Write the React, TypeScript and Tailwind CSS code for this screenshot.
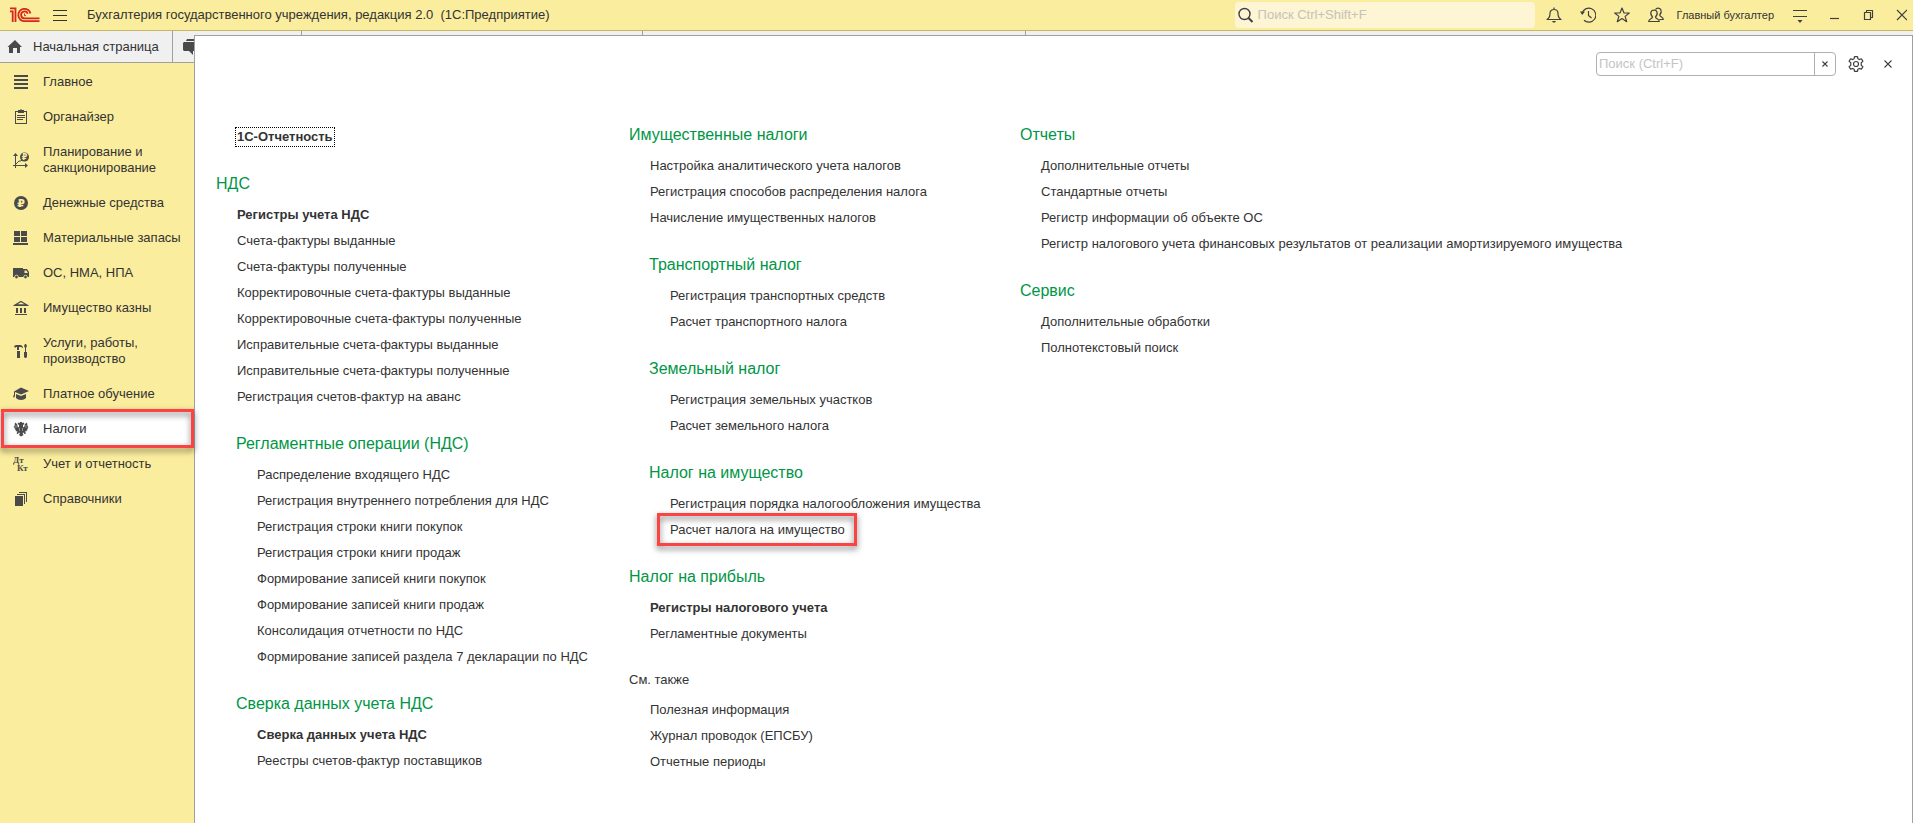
import type { ReactNode } from 'react';

type MenuItem = { text: string; bold?: boolean; marked?: boolean };
type Group = { title: string; items: MenuItem[]; nested?: boolean; minor?: boolean };
type Section = { label: string; icon: ReactNode; active?: boolean };

const item = (text: string): MenuItem => ({ text });

const vatGroups: Group[] = [
    {
        title: 'НДС',
        items: [
            { text: 'Регистры учета НДС', bold: true },
            item('Счета-фактуры выданные'),
            item('Счета-фактуры полученные'),
            item('Корректировочные счета-фактуры выданные'),
            item('Корректировочные счета-фактуры полученные'),
            item('Исправительные счета-фактуры выданные'),
            item('Исправительные счета-фактуры полученные'),
            item('Регистрация счетов-фактур на аванс'),
        ],
    },
    {
        title: 'Регламентные операции (НДС)',
        nested: true,
        items: [
            item('Распределение входящего НДС'),
            item('Регистрация внутреннего потребления для НДС'),
            item('Регистрация строки книги покупок'),
            item('Регистрация строки книги продаж'),
            item('Формирование записей книги покупок'),
            item('Формирование записей книги продаж'),
            item('Консолидация отчетности по НДС'),
            item('Формирование записей раздела 7 декларации по НДС'),
        ],
    },
    {
        title: 'Сверка данных учета НДС',
        nested: true,
        items: [{ text: 'Сверка данных учета НДС', bold: true }, item('Реестры счетов-фактур поставщиков')],
    },
];

const propertyGroups: Group[] = [
    {
        title: 'Имущественные налоги',
        items: [
            item('Настройка аналитического учета налогов'),
            item('Регистрация способов распределения налога'),
            item('Начисление имущественных налогов'),
        ],
    },
    {
        title: 'Транспортный налог',
        nested: true,
        items: [item('Регистрация транспортных средств'), item('Расчет транспортного налога')],
    },
    {
        title: 'Земельный налог',
        nested: true,
        items: [item('Регистрация земельных участков'), item('Расчет земельного налога')],
    },
    {
        title: 'Налог на имущество',
        nested: true,
        items: [
            item('Регистрация порядка налогообложения имущества'),
            { text: 'Расчет налога на имущество', marked: true },
        ],
    },
    {
        title: 'Налог на прибыль',
        items: [{ text: 'Регистры налогового учета', bold: true }, item('Регламентные документы')],
    },
    {
        title: 'См. также',
        minor: true,
        items: [item('Полезная информация'), item('Журнал проводок (ЕПСБУ)'), item('Отчетные периоды')],
    },
];

const reportGroups: Group[] = [
    {
        title: 'Отчеты',
        items: [
            item('Дополнительные отчеты'),
            item('Стандартные отчеты'),
            item('Регистр информации об объекте ОС'),
            item('Регистр налогового учета финансовых результатов от реализации амортизируемого имущества'),
        ],
    },
    {
        title: 'Сервис',
        items: [item('Дополнительные обработки'), item('Полнотекстовый поиск')],
    },
];

function Glyph({ children }: { children: ReactNode }) {
    return (
        <svg viewBox="0 0 16 16" className="w-4 h-4 shrink-0" fill="#4a4a4a" aria-hidden="true">
            {children}
        </svg>
    );
}

function LineIcon({ children }: { children: ReactNode }) {
    return (
        <svg
            viewBox="0 0 16 16"
            className="w-4 h-4 shrink-0"
            fill="none"
            stroke="#404040"
            strokeWidth="1.2"
            strokeLinejoin="round"
            aria-hidden="true"
        >
            {children}
        </svg>
    );
}

const sections: Section[] = [
    {
        label: 'Главное',
        icon: (
            <Glyph>
                <path d="M1 1h14v2H1zM1 5h14v2H1zM1 9h14v2H1zM1 13h14v2H1z" />
            </Glyph>
        ),
    },
    {
        label: 'Органайзер',
        icon: (
            <Glyph>
                <path d="M2 2h3v1H3v11h10V3h-2V2h3v13H2z" />
                <path d="M5 1h2l1-1 1 1h2v3H5zM4 6h8v1H4zM4 8h8v1H4zM4 10h6v1H4z" />
            </Glyph>
        ),
    },
    {
        label: 'Планирование и санкционирование',
        icon: (
            <Glyph>
                <path d="M2 3h1v10h9v1H3v2H2v-2H0v-1h2z" />
                <path d="M0 4l2.500-3L5 4zM12 11l3 2.500-3 2.500z" />
                <path d="M3 12l3-3h2l1-1" fill="none" stroke="#4a4a4a" />
                <circle cx="11.500" cy="5" r="4.500" />
                <text x="11.500" y="8" fontSize="8" textAnchor="middle" fontWeight="bold" fontFamily="DejaVu Sans, sans-serif" fill="#fbed9e">
                    ₽
                </text>
            </Glyph>
        ),
    },
    {
        label: 'Денежные средства',
        icon: (
            <Glyph>
                <circle cx="8" cy="8" r="7" />
                <text x="8" y="12" fontSize="11" textAnchor="middle" fontWeight="bold" fontFamily="DejaVu Sans, sans-serif" fill="#fbed9e">
                    ₽
                </text>
            </Glyph>
        ),
    },
    {
        label: 'Материальные запасы',
        icon: (
            <Glyph>
                <path d="M1 1h6v5H1zM8 1h6v5H8zM1 7h6v5H1zM8 7h6v5H8zM0 13h15v2H0z" />
            </Glyph>
        ),
    },
    {
        label: 'ОС, НМА, НПА',
        icon: (
            <Glyph>
                <path d="M0 3h10v9H0z" />
                <path d="M10 4h4l2 3v5h-6zM11.500 5.500V8H15l-1.500-2.500z" fillRule="evenodd" />
                <circle cx="3.500" cy="12" r="1.800" stroke="#fbed9e" strokeWidth=".8" />
                <circle cx="12.500" cy="12" r="1.800" stroke="#fbed9e" strokeWidth=".8" />
            </Glyph>
        ),
    },
    {
        label: 'Имущество казны',
        icon: (
            <Glyph>
                <path d="M8 1.500L14 5H2z" fill="none" stroke="#4a4a4a" strokeWidth="1.300" />
                <path d="M1 5h14v1H1zM3 8h2v5H3zM7 8h2v5H7zM11 8h2v5h-2zM2 14h12v1H2z" />
            </Glyph>
        ),
    },
    {
        label: 'Услуги, работы, производство',
        icon: (
            <Glyph>
                <path d="M1 3l2-1h5l2 2v1L8 4H6v3H4V4H3L2 5zM4 8h3v7H4zM12 1h1l1 2-1 2v4h-1V5l-1-2zM11 9h3v5l-1 1h-1l-1-1z" />
            </Glyph>
        ),
    },
    {
        label: 'Платное обучение',
        icon: (
            <Glyph>
                <path d="M8 1.500L16 5 8 8.500 2 6v4L1 12 0 10l1-1V5.500z" />
                <path d="M3 8l5 2 5-2v4c-2 2.500-8 2.500-10 0z" />
            </Glyph>
        ),
    },
    {
        label: 'Налоги',
        active: true,
        icon: (
            <Glyph>
                <path d="M7 1h2v1l1.500-.5 1 1.500-1.500 1v2l1 .5.500-1.500L12 3l2-1.500.5 3.500 1 1-1 1 .5 1-1.500 1 .5 1-2 .5 1 2-1.500.500-1-1.500-1 .5 1 2L8 15.500 6 14l1-2-1-.5L5 13l-1.500-.5 1-2-2-.5.500-1L1.500 8 2 7 .5 6l1-1L2 1.500 4 3l.5 2L5 6.500 6 6V4L4.500 3l1-1.500L7 2z" />
                <path d="M3 4v3M13 4v3M6.500 7v3M9.500 7v3" stroke="#fff" strokeWidth=".4" />
            </Glyph>
        ),
    },
    {
        label: 'Учет и отчетность',
        icon: (
            <Glyph>
                <text x="0" y="7" fontSize="9" fontWeight="bold" fontFamily="Liberation Serif, serif">
                    Дт
                </text>
                <text x="4" y="15" fontSize="9" fontWeight="bold" fontFamily="Liberation Serif, serif">
                    Кт
                </text>
            </Glyph>
        ),
    },
    {
        label: 'Справочники',
        icon: (
            <Glyph>
                <path d="M2 5h8v10H2z" />
                <path d="M4 3h8v10h-1V4H4zM6 1h8v10h-1V2H6z" />
            </Glyph>
        ),
    },
];

function Logo() {
    return (
        <svg viewBox="0 0 30 16" className="w-[30px] h-4 shrink-0" fill="none" stroke="#d8261c" strokeWidth="1.8" aria-label="1С">
            <path d="M0 4.300H2.700V15M0 1.300H5.500V15" />
            <path d="M20.500 6.500A6.200 6.200 0 1 0 14.800 14.200H29.500" />
            <path d="M17.700 6.800A3.400 3.400 0 1 0 14.800 11.300H29.500" />
            <path d="M14.500 6.500V8.700H16" strokeWidth="1" />
        </svg>
    );
}

// Red frame drawn over the element the user should click
function Marker({ className }: { className: string }) {
    return (
        <span
            className={`absolute pointer-events-none border-3 border-[#fc4343] drop-shadow-[0_3px_3px_rgba(0,0,0,0.55)] ${className}`}
        />
    );
}

function TitleBar() {
    return (
        <header className="flex items-center h-[31px] pl-2.5 pr-1.5 bg-[#fbed9e] border-b border-[#c6b765]">
            <Logo />
            <button type="button" aria-label="Меню" className="ml-[13px] flex flex-col gap-1">
                <span className="block w-3.5 h-px bg-[#333]" />
                <span className="block w-3.5 h-px bg-[#333]" />
                <span className="block w-3.5 h-px bg-[#333]" />
            </button>
            <h1 className="ml-5 whitespace-nowrap">
                Бухгалтерия государственного учреждения, редакция 2.0&nbsp; (1С:Предприятие)
            </h1>

            <div className="ml-auto flex items-center">
                <label className="flex items-center w-[300px] h-[26px] pl-[3px] gap-1 rounded-sm bg-[#fdf5d3]">
                    <LineIcon>
                        <circle cx="6.500" cy="7" r="5.500" strokeWidth="1.4" />
                        <path d="M10.500 11l4 4" strokeWidth="2" />
                    </LineIcon>
                    <input
                        type="text"
                        aria-label="Поиск"
                        placeholder="Поиск Ctrl+Shift+F"
                        className="flex-1 min-w-0 bg-transparent outline-none placeholder:text-[#c6c3b8]"
                    />
                </label>
                <button type="button" aria-label="Уведомления" className="ml-[11px]">
                    <LineIcon>
                        <path d="M1 12.500c2.500-1.500 3-3 3-6C4 4 5.500 2.500 8 2.500S12 4 12 6.500c0 3 .5 4.500 3 6zM8 .5v2" />
                        <path d="M6 14h4l-1 1.500H7z" fill="#404040" stroke="none" />
                    </LineIcon>
                </button>
                <button type="button" aria-label="История" className="ml-[18px]">
                    <LineIcon>
                        <path d="M2 6.500A7 7 0 1 1 4 13.200M8.500 4v4.500l3 2.500" />
                        <path d="M0 4.500h5L2.200 8z" fill="#404040" stroke="none" />
                    </LineIcon>
                </button>
                <button type="button" aria-label="Избранное" className="ml-[18px]">
                    <LineIcon>
                        <path d="M8 1l2 5h5.300l-4.200 3.400 1.600 5.300L8 11.600l-4.700 3.100 1.600-5.300L.7 6H6z" />
                    </LineIcon>
                </button>
                <button type="button" aria-label="Пользователи" className="ml-[18px]">
                    <LineIcon>
                        <path d="M.7 14.500c0-3 3.800-2.500 3.800-4.500C3 8.500 2.500 6.500 3 5c.8-2.500 5.200-2.500 6 0 .5 1.500 0 3.500-1.500 5 0 2 3.800 1.500 3.800 4.500z" />
                        <path d="M7.500 2.500c1-2 4.700-2 5.500.5.500 1.500 0 3.500-1.300 5 0 2 3.600 1.500 3.600 4.500h-4" />
                    </LineIcon>
                </button>
                <button type="button" className="ml-[13px] text-[11px] whitespace-nowrap">
                    Главный бухгалтер
                </button>
                <button type="button" aria-label="Настройки окна" className="ml-[18px]">
                    <LineIcon>
                        <path d="M1 3.500h14M1 9.500h14" strokeWidth="1" />
                        <path d="M5.500 13h5L8 16z" fill="#404040" stroke="none" />
                    </LineIcon>
                </button>
                <button type="button" aria-label="Свернуть" className="ml-[19px]">
                    <LineIcon>
                        <path d="M3 11.500h9" />
                    </LineIcon>
                </button>
                <button type="button" aria-label="Восстановить" className="ml-[18px]">
                    <LineIcon>
                        <path d="M3.500 5.500h6v7h-6zM5.500 5.500v-2h6v7h-2" />
                    </LineIcon>
                </button>
                <button type="button" aria-label="Закрыть" className="ml-3.5">
                    <LineIcon>
                        <path d="M6 3l10 10M16 3L6 13" />
                    </LineIcon>
                </button>
            </div>
        </header>
    );
}

function TabStrip() {
    return (
        <nav className="flex h-8 bg-[#f0f0f0] border-b border-[#a0a0a0]">
            <button type="button" className="flex items-center w-[173px] pl-[7px] gap-2.5 border-r border-[#a0a0a0]">
                <Glyph>
                    <path d="M8 1L.5 8H2v6h4V9h4v5h3V8h2z" />
                </Glyph>
                Начальная страница
            </button>
            <button type="button" aria-label="Обсуждения" className="w-[129px] pl-2.5 border-r border-[#a0a0a0]">
                <Glyph>
                    <path d="M1 3h12v9H10v4l-4-4H1L0 11V4zM4 0h12v9h-2V2H3z" />
                </Glyph>
            </button>
            <span className="w-[341px] border-r border-[#a0a0a0]" />
            <span className="w-[383px] border-r border-[#a0a0a0]" />
        </nav>
    );
}

function Sidebar() {
    return (
        <aside className="w-[194px] shrink-0 pt-0.5 bg-[#fbed9e]">
            {sections.map((s) => (
                <button
                    key={s.label}
                    type="button"
                    className={`relative flex items-center w-full pl-[13px] pr-2 pt-[9px] pb-2.5 gap-3.5 leading-4 text-left ${s.active ? 'bg-white z-20' : ''}`}
                >
                    {s.icon}
                    <span>{s.label}</span>
                    {s.active && <Marker className="left-px right-0 -top-[3px] -bottom-px" />}
                </button>
            ))}
        </aside>
    );
}

function MenuGroup({ group }: { group: Group }) {
    return (
        <section className={group.nested ? 'pl-5' : ''}>
            {group.minor ? (
                <h2 className="h-6 mb-[5px] leading-6">{group.title}</h2>
            ) : (
                <h2 className="h-[26px] mb-[5px] text-base leading-[26px] text-[#009646]">{group.title}</h2>
            )}
            <ul className="pl-[21px]">
                {group.items.map((i) => (
                    <li key={i.text} className="relative h-[26px] leading-[26px] whitespace-nowrap">
                        <a href="#" className={i.bold ? 'font-bold' : ''}>
                            {i.text}
                        </a>
                        {i.marked && <Marker className="-left-[13px] -top-1 w-[200px] h-[33px]" />}
                    </li>
                ))}
            </ul>
        </section>
    );
}

function Column({ groups, children }: { groups: Group[]; children?: ReactNode }) {
    return (
        <div className="flex flex-col gap-[21px]">
            {children}
            {groups.map((g) => (
                <MenuGroup key={g.title} group={g} />
            ))}
        </div>
    );
}

function FunctionPanel() {
    return (
        <main className="relative z-10 flex-1 min-w-0 -mt-7 pt-4 bg-white border border-b-0 border-[#a0a0a0]">
            <div className="flex items-center justify-end pr-5">
                <div className="flex w-60 h-6 border border-[#b0b0b0] rounded-sm">
                    <input
                        type="text"
                        aria-label="Поиск по разделу"
                        placeholder="Поиск (Ctrl+F)"
                        className="flex-1 min-w-0 pl-0.5 outline-none placeholder:text-[#c4c4c4]"
                    />
                    <button
                        type="button"
                        aria-label="Очистить"
                        className="flex items-center justify-center w-[21px] border-l border-[#b0b0b0]"
                    >
                        <svg viewBox="0 0 6 6" className="w-1.5 h-1.5" stroke="#404040" strokeWidth="1.1" aria-hidden="true">
                            <path d="M.5.5l5 5M5.500.5l-5 5" />
                        </svg>
                    </button>
                </div>
                <button type="button" aria-label="Настройка" className="ml-3">
                    <LineIcon>
                        <circle cx="8" cy="8" r="2.500" />
                        <path d="M6.500.6h3l.4 2.200 1.400.8 2.100-.8 1.500 2.600-1.700 1.400v2.400l1.700 1.400-1.500 2.600-2.100-.8-1.400.8-.4 2.200h-3l-.4-2.200-1.400-.8-2.100.8-1.500-2.600 1.700-1.400V6.800L1.100 5.400l1.500-2.600 2.100.8 1.400-.8z" />
                    </LineIcon>
                </button>
                <button type="button" aria-label="Закрыть панель" className="ml-5">
                    <svg viewBox="0 0 8 8" className="w-2 h-2" stroke="#404040" strokeWidth="1.1" aria-hidden="true">
                        <path d="M.5.5l7 7M7.500.5l-7 7" />
                    </svg>
                </button>
            </div>

            <div className="grid grid-cols-[413px_391px_auto] mt-[46px] pl-[21px]">
                <Column groups={vatGroups}>
                    <div className="flex items-center h-[26px] mt-0.5 pl-[19px]">
                        <a href="#" className="h-5 px-px leading-[18px] font-bold border border-dotted border-black">
                            1С-Отчетность
                        </a>
                    </div>
                </Column>
                <Column groups={propertyGroups} />
                <Column groups={reportGroups} />
            </div>
        </main>
    );
}

export default function App() {
    return (
        <div className="flex flex-col min-h-screen bg-white text-[#333] text-[13px] font-['Liberation_Sans',Arial,sans-serif]">
            <TitleBar />
            <TabStrip />
            <div className="flex flex-1">
                <Sidebar />
                <FunctionPanel />
            </div>
        </div>
    );
}
